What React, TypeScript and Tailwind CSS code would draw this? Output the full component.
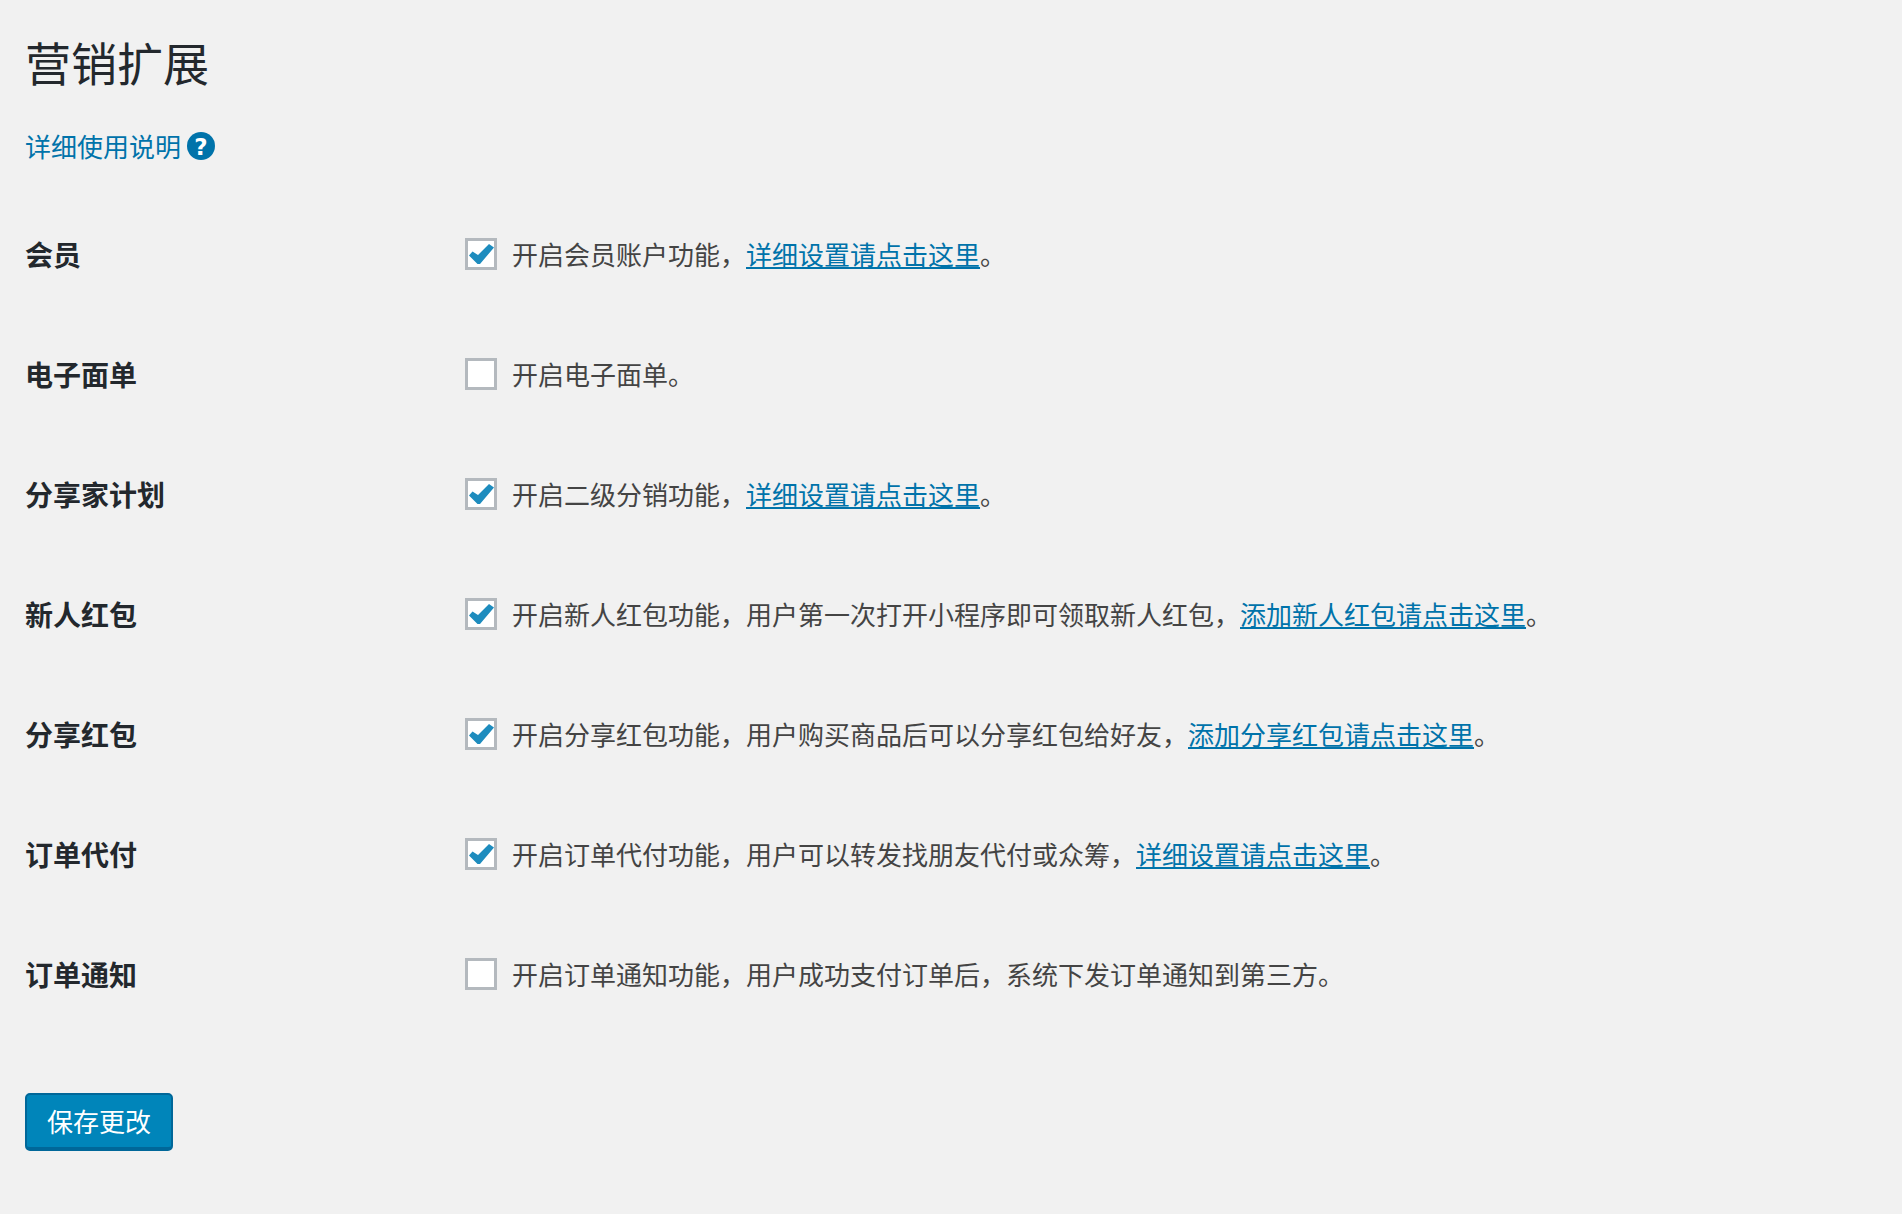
import React from "react";

type Part = { t: string; link?: boolean };
const rows: { label: string; checked: boolean; parts: Part[] }[] = [
  { label: "会员", checked: true, parts: [{ t: "开启会员账户功能，" }, { t: "详细设置请点击这里", link: true }, { t: "。" }] },
  { label: "电子面单", checked: false, parts: [{ t: "开启电子面单。" }] },
  { label: "分享家计划", checked: true, parts: [{ t: "开启二级分销功能，" }, { t: "详细设置请点击这里", link: true }, { t: "。" }] },
  { label: "新人红包", checked: true, parts: [{ t: "开启新人红包功能，用户第一次打开小程序即可领取新人红包，" }, { t: "添加新人红包请点击这里", link: true }, { t: "。" }] },
  { label: "分享红包", checked: true, parts: [{ t: "开启分享红包功能，用户购买商品后可以分享红包给好友，" }, { t: "添加分享红包请点击这里", link: true }, { t: "。" }] },
  { label: "订单代付", checked: true, parts: [{ t: "开启订单代付功能，用户可以转发找朋友代付或众筹，" }, { t: "详细设置请点击这里", link: true }, { t: "。" }] },
  { label: "订单通知", checked: false, parts: [{ t: "开启订单通知功能，用户成功支付订单后，系统下发订单通知到第三方。" }] },
];

function Box({ checked }: { checked: boolean }) {
  return (
    <span className="flex h-[32px] w-[32px] shrink-0 items-center justify-center border-[3px] border-[#b4b9be] bg-white">
      {checked && (
        <svg className="ml-[1px] shrink-0" width="25" height="20" viewBox="0 0 25 20">
          <path d="M0 11.5 L3.5 7.5 L9 11 L20 0 L25 3.5 L11 20 L8.5 20 Z" fill="#1e8cbe" />
        </svg>
      )}
    </span>
  );
}

export default function App() {
  return (
    <div className="min-h-[1214px] bg-[#f1f1f1] pl-[25px] pt-[31px] font-['Microsoft_YaHei','Noto_Sans_CJK_SC',sans-serif] text-[#444]">
      <h1 className="h-[60px] text-[46px] leading-[60px] font-normal text-[#23282d]">营销扩展</h1>
      <div className="mt-[37px] flex h-[36px] items-center">
        <a className="text-[26px] leading-[36px] text-[#0073aa]">详细使用说明</a>
        <svg className="ml-[6px]" width="28" height="28" viewBox="0 0 28 28">
          <circle cx="14" cy="14" r="14" fill="#0073aa" />
          <text x="14" y="22.5" textAnchor="middle" fontSize="23" fontWeight="700" fill="#fff" fontFamily="DejaVu Sans, sans-serif">?</text>
        </svg>
      </div>
      <div className="mt-[72px] flex flex-col gap-[84px]">
        {rows.map((r) => (
          <div key={r.label} className="flex h-[36px] items-center">
            <div className="w-[440px] shrink-0 text-[28px] leading-[36px] font-bold text-[#23282d]">{r.label}</div>
            <Box checked={r.checked} />
            <div className="ml-[15px] text-[26px] leading-[36px] whitespace-nowrap">
              {r.parts.map((p, i) =>
                p.link ? (
                  <a key={i} className="text-[#0073aa] underline">{p.t}</a>
                ) : (
                  <span key={i}>{p.t}</span>
                )
              )}
            </div>
          </div>
        ))}
      </div>
      <button className="mt-[101px] h-[58px] w-[148px] rounded-[5px] border-x-[2px] border-t-[2px] border-b-[4px] border-[#006799] bg-[#0085ba] pb-[1px] text-[26px] leading-[36px] text-white">
        保存更改
      </button>
    </div>
  );
}
